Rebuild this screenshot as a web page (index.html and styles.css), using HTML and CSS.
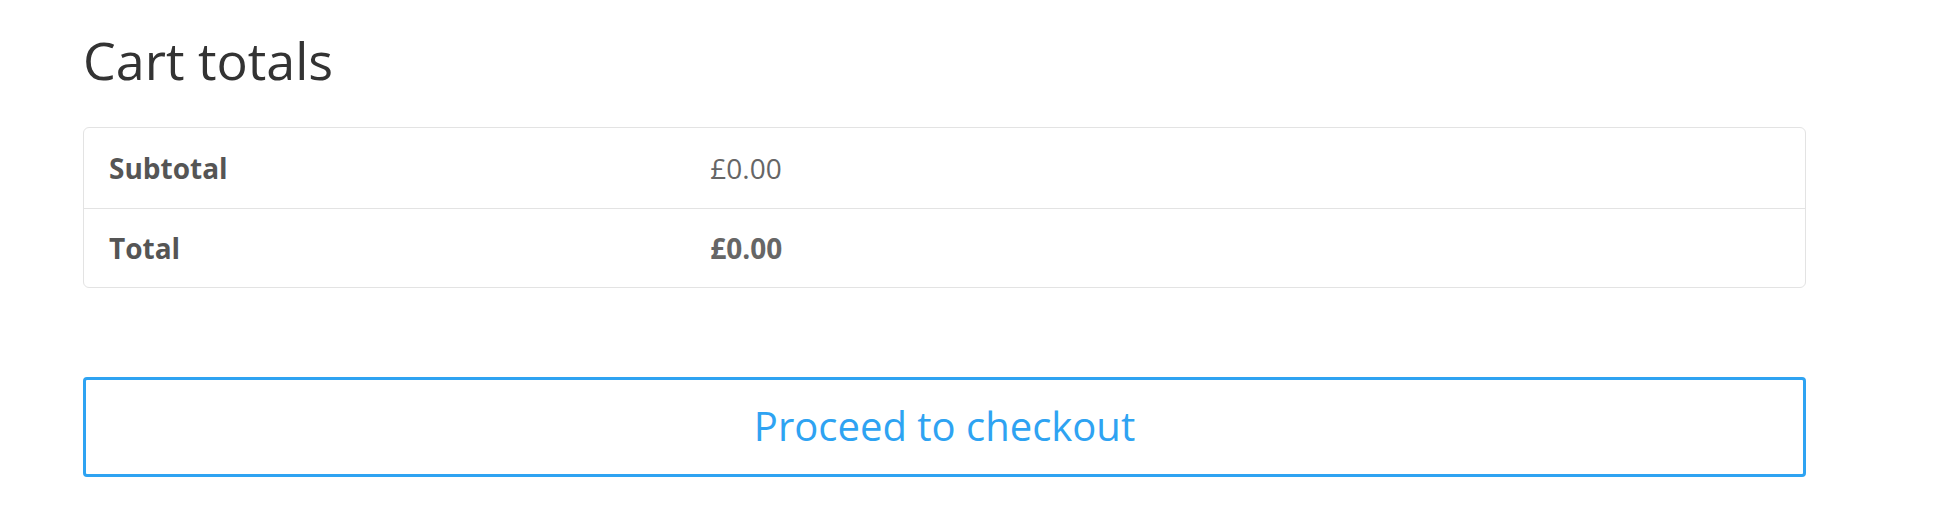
FILE: index.html
```html
<!DOCTYPE html>
<html lang="en">
<head>
  <meta charset="UTF-8">
  <meta name="viewport" content="width=device-width, initial-scale=1.0">
  <title>Cart totals</title>
  <link rel="stylesheet" href="styles.css">
</head>
<body>
  <div class="cart-totals">
    <h2 class="title">Cart totals</h2>
    <div class="totals">
      <div class="row">
        <div class="label">Subtotal</div>
        <div class="value">£0.00</div>
      </div>
      <div class="row">
        <div class="label">Total</div>
        <div class="value strong">£0.00</div>
      </div>
    </div>
    <a class="checkout" href="javascript:;">Proceed to checkout</a>
  </div>
</body>
</html>
```

FILE: styles.css
```css
* {
  margin: 0;
  padding: 0;
  box-sizing: border-box;
}
body {
  background-color: #fff;
  font-family: "Open Sans", "Liberation Sans", sans-serif;
  color: #666;
}
.cart-totals {
  width: 1723px;
  margin-left: 83px;
  padding-top: 34px;
}
.title {
  font-size: 52px;
  line-height: 52px;
  font-weight: 400;
  color: #333;
}
.totals {
  margin-top: 41px;
  border: 1px solid #e3e3e3;
  border-radius: 6px;
}
.row {
  display: grid;
  grid-template-columns: 35% 1fr;
  height: 80px;
  align-items: center;
  font-size: 28px;
}
.row + .row {
  border-top: 1px solid #e3e3e3;
  height: 79px;
}
.label {
  padding-left: 25px;
  font-weight: 700;
  color: #555;
}
.value {
  padding-left: 24px;
}
.value.strong {
  font-weight: 700;
}
.checkout {
  display: flex;
  justify-content: center;
  align-items: center;
  margin-top: 89px;
  height: 100px;
  padding-bottom: 4px;
  border: 3px solid #2ea3f2;
  border-radius: 4px;
  font-size: 40px;
  color: #2ea3f2;
  text-decoration: none;
}
```
